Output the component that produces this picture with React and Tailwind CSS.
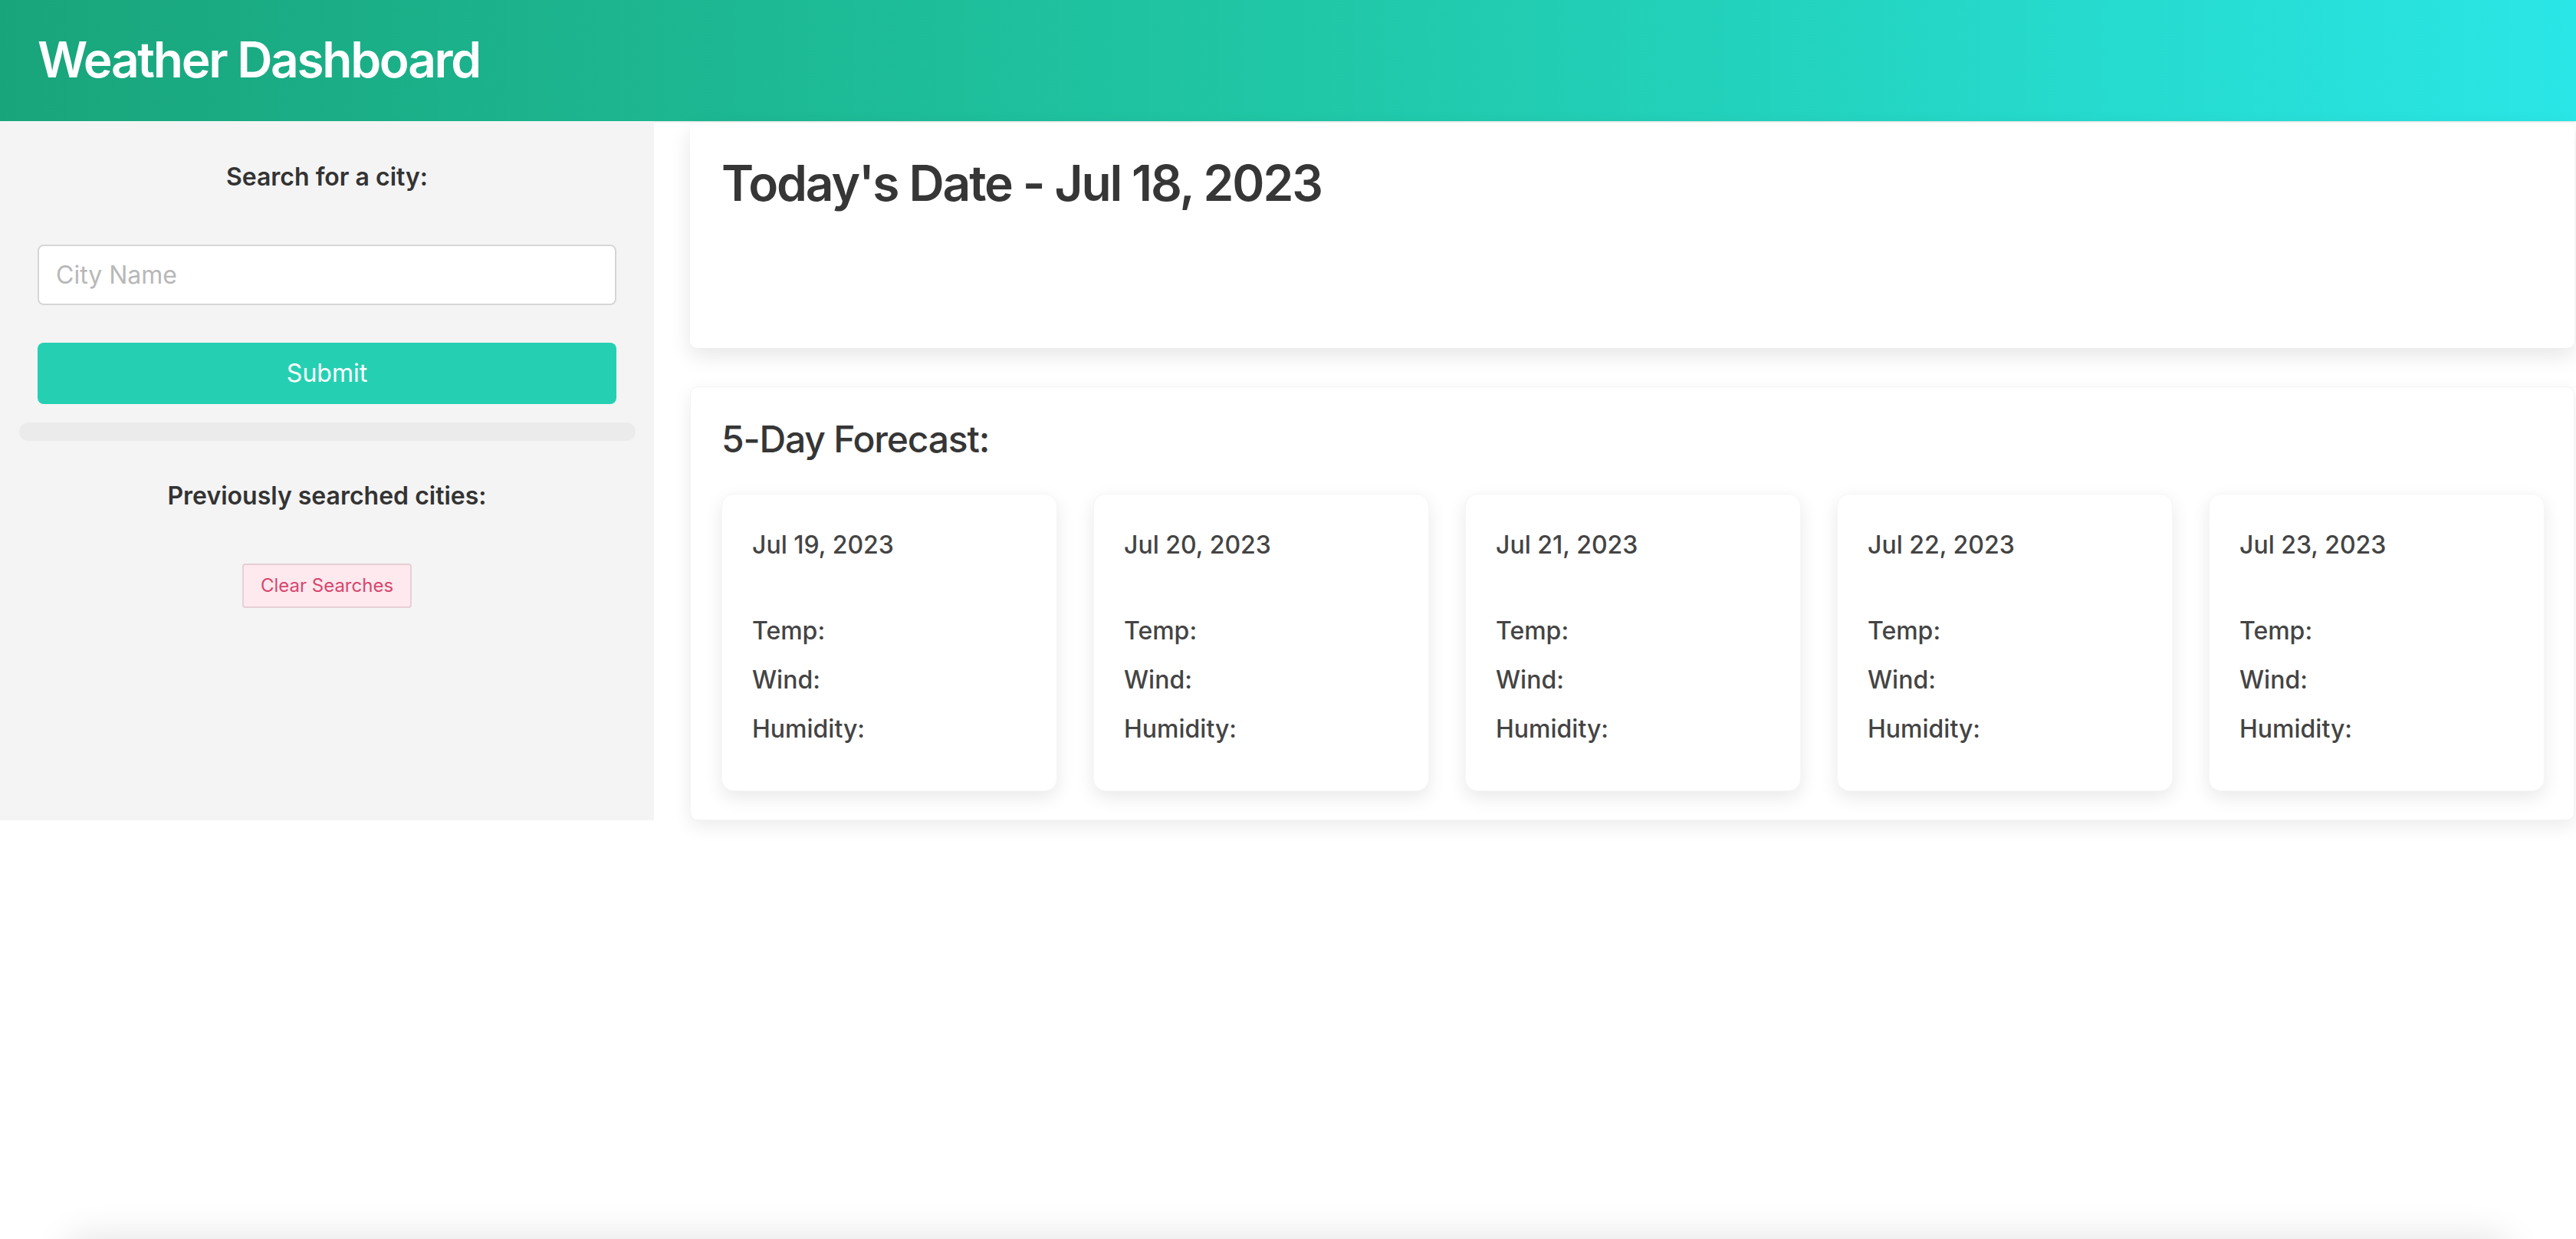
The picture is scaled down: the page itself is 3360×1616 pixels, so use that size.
import React from 'react';

const days = ['Jul 19, 2023', 'Jul 20, 2023', 'Jul 21, 2023', 'Jul 22, 2023', 'Jul 23, 2023'];

function ForecastCard({ date }) {
  return (
    <div className="bg-white rounded-[16px] shadow-[0_8px_24px_rgba(0,0,0,0.09)] border border-[#f6f6f6] px-[39px] pt-[42px] pb-[56px] text-[32px] leading-[48px] font-medium text-[#444]">
      <p>{date}</p>
      <div className="mt-[64px] flex flex-col gap-[16px]">
        <p>Temp:</p>
        <p>Wind:</p>
        <p>Humidity:</p>
      </div>
    </div>
  );
}

export default function App() {
  return (
    <div className="h-[1616px] overflow-hidden flex flex-col bg-white font-['Inter','Noto_Sans',sans-serif] text-[#363636]">
      <header className="h-[158px] shrink-0 flex items-center px-[49px] pb-[3px] bg-gradient-to-r from-[#19a57b] via-[#20c7a6] to-[#2ae6e6] shadow-[0_1px_2px_rgba(0,0,0,0.12)]">
        <h1 className="text-[64px] font-semibold tracking-[-0.036em] text-white">Weather Dashboard</h1>
      </header>

      <div className="flex">
        <aside className="w-[853px] shrink-0 bg-[#f4f4f4] flex flex-col items-center pt-[49px]">
          <h3 className="text-[32px] leading-[48px] font-semibold text-[#333]">Search for a city:</h3>
          <input
            className="mt-[64px] w-[755px] h-[79px] rounded-[8px] border-2 border-[#d6d6d6] bg-white px-[22px] text-[32px] placeholder:text-[#b8b8b8] outline-none"
            placeholder="City Name"
          />
          <button className="mt-[49px] w-[755px] h-[80px] rounded-[8px] bg-[#25d0b2] text-white text-[32px]">
            Submit
          </button>
          <div className="mt-[24px] w-[804px] h-[24px] rounded-full bg-[#ebebeb]" />
          <h3 className="mt-[48px] text-[32px] leading-[48px] font-semibold text-[#333]">Previously searched cities:</h3>
          <button className="mt-[64px] w-[221px] h-[58px] rounded-[4px] border-2 border-[#e6cfd6] bg-[#fde9ee] text-[24px] text-[#d8466d]">
            Clear Searches
          </button>
        </aside>

        <main className="flex-1 pl-[47px] pr-[2px] pt-[2px] flex flex-col gap-[50px]">
          <section className="h-[294px] bg-white rounded-[10px] shadow-[0_10px_28px_rgba(0,0,0,0.1)] px-[41px] pt-[31px]">
            <h2 className="text-[64px] font-semibold tracking-[-0.033em] text-[#363636]">Today's Date - Jul 18, 2023</h2>
          </section>

          <section className="bg-white rounded-[10px] border border-[#f3f3f3] shadow-[0_8px_24px_rgba(0,0,0,0.08)] pl-[40px] pr-[38px] pt-[39px] pb-[37px]">
            <h3 className="text-[48px] leading-[58px] font-medium tracking-tight text-[#363636]">5-Day Forecast:</h3>
            <div className="mt-[42px] grid grid-cols-5 gap-[47px]">
              {days.map((d) => (
                <ForecastCard key={d} date={d} />
              ))}
            </div>
          </section>
        </main>
      </div>

      <div className="flex-1" />
      <div className="shrink-0 h-[60px] mb-[-60px] mx-[90px] bg-white rounded-[10px] shadow-[0_0_50px_rgba(0,0,0,0.12)]" />
    </div>
  );
}
